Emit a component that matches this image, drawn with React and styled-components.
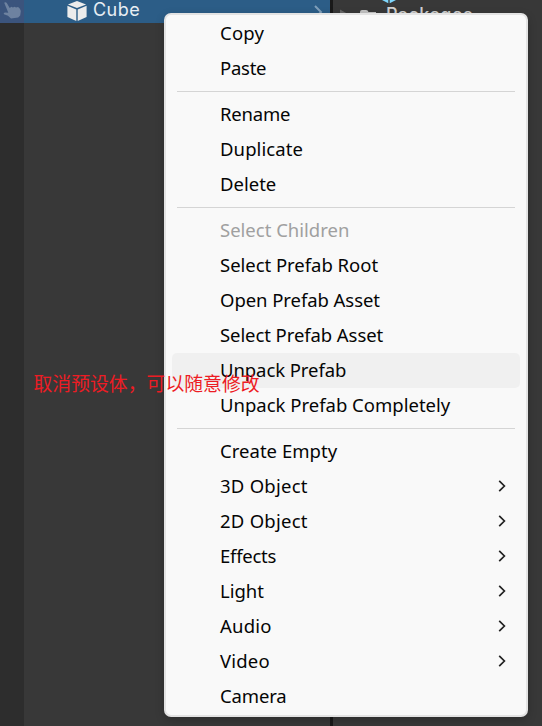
import React from "react";
import styled, { createGlobalStyle } from "styled-components";

const Global = createGlobalStyle`
  * { box-sizing: border-box; }
  body { margin: 0; background: #383838; overflow: hidden; }
`;

const Editor = styled.main`
  position: relative;
  display: grid;
  grid-template-columns: 330px 3px 1fr;
  width: 542px;
  height: 726px;
  overflow: hidden;
  background: #383838;
`;

const Hierarchy = styled.section`
  display: grid;
  grid-template-columns: 24px 1fr;
  grid-template-rows: 23px 1fr;
`;

const PickCell = styled.div`
  background: #3b547d;
  svg { display: block; }
`;

const SelectedRow = styled.div`
  display: flex;
  align-items: flex-start;
  background: #2c5d87;
  padding-left: 42px;
  svg { flex: none; }
`;

const ObjectName = styled.span`
  width: 225px;
  padding-left: 5px;
  font: 18px/20px Inter, sans-serif;
  letter-spacing: 0.45px;
  color: #e8eef3;
`;

const Gutter = styled.div`
  background: #2d2d2d;
`;

const Divider = styled.div`
  background: #191919;
`;

const Project = styled.section`
  display: flex;
  align-items: flex-start;
  padding-left: 5px;
  svg { flex: none; }
`;

const FolderName = styled.span`
  margin-top: 4px;
  margin-left: -18px;
  font: 500 18px/22px Inter, sans-serif;
  letter-spacing: 0.4px;
  color: #d0d0d0;
`;

const Menu = styled.div`
  position: absolute;
  left: 164px;
  top: 13px;
  width: 364px;
  height: 704px;
  padding: 1px 6px;
  border: 2px solid #e3e3e3;
  border-radius: 7px;
  background: #f9f9f9;
  box-shadow: 0 3px 10px rgba(0, 0, 0, 0.2);
`;

const Item = styled.div`
  display: flex;
  align-items: center;
  justify-content: space-between;
  height: 35px;
  padding: 0 14px 2px 48px;
  border-radius: 5px;
  background: ${(p) => (p.$active ? "#f0f0f0" : "transparent")};
  color: ${(p) => (p.$disabled ? "#a0a0a0" : "#050505")};
  font: 400 18.5px/33px "Noto Sans", "Open Sans", sans-serif;
  letter-spacing: ${(p) => p.$spacing ?? 0}px;
  white-space: nowrap;
`;

const Separator = styled.div`
  height: 1px;
  margin: 5px;
  background: #d5d5d5;
`;

const Note = styled.div`
  position: absolute;
  left: 33.5px;
  top: 369px;
  font: 18.85px/28px "Noto Sans CJK SC", sans-serif;
  color: #ed1c24;
  white-space: nowrap;
`;

const groups = [
  [{ t: "Copy", spacing: 0.2 }, { t: "Paste", spacing: -0.25 }],
  [{ t: "Rename", spacing: -0.2 }, { t: "Duplicate", spacing: 0.1 }, { t: "Delete" }],
  [
    { t: "Select Children", disabled: true },
    { t: "Select Prefab Root", spacing: -0.03 },
    { t: "Open Prefab Asset", spacing: -0.06 },
    { t: "Select Prefab Asset", spacing: -0.08 },
    { t: "Unpack Prefab", active: true, spacing: -0.08 },
    { t: "Unpack Prefab Completely" },
  ],
  [
    { t: "Create Empty", spacing: 0.03 },
    { t: "3D Object", sub: true, spacing: 0.25 },
    { t: "2D Object", sub: true, spacing: 0.25 },
    { t: "Effects", sub: true, spacing: -0.25 },
    { t: "Light", sub: true },
    { t: "Audio", sub: true, spacing: 0.2 },
    { t: "Video", sub: true, spacing: 0.2 },
    { t: "Camera", spacing: -0.15 },
  ],
];

const Chevron = () => (
  <svg width="8" height="12" viewBox="0 0 8 12" fill="none" stroke="#222" strokeWidth="1.7">
    <path d="M1.2 0.8 6.4 6 1.2 11.2" />
  </svg>
);

const Hand = () => (
  <svg width="24" height="23" viewBox="0 0 24 23" fill="#6e82a0">
    <path d="M4.2 2.8C5 1.8 6.3 2.2 6.8 3.1L9.7 8l1.7-1.2 1.5.8 1.8-.9 1.3.9 2-.5c1.4.7 2.7 2.4 2.8 4.2l-.6 4.2-2 2.1-7.2 1-3-2.9-4-1.4c-.7-1 .1-1.8 1.2-1.8l3.1.2Z" />
  </svg>
);

const Cube = () => (
  <svg width="22" height="23" viewBox="0 0 22 23" fill="#ececec">
    <path d="m11 1 9.1 3.4L11 8.1 1.9 4.4ZM1.4 5.8 10.3 9.5V21L1.4 17ZM20.6 5.8 11.7 9.5V21l8.9-4Z" />
  </svg>
);

const FolderIcons = () => (
  <svg width="66" height="20" viewBox="0 0 66 20">
    <path d="M2 9.5 9 13.5 2 17Z" fill="#666" />
    <path d="M22 12q0-2 2-2h4q2 0 2.5 2H38v8H22Z" fill="#c2c2c2" />
    <path d="M44 0h6.3v3.2ZM51.7 0H58l-6.3 3.2Z" fill="#7fd6fc" />
  </svg>
);

export default function App() {
  return (
    <>
      <Global />
      <Editor>
        <Hierarchy>
          <PickCell><Hand /></PickCell>
          <SelectedRow>
            <Cube />
            <ObjectName>Cube</ObjectName>
            <svg width="12" height="20" viewBox="0 0 12 20" fill="none" stroke="#7f9fba" strokeWidth="2">
              <path d="m2 6 6 6-6 6" />
            </svg>
          </SelectedRow>
          <Gutter />
        </Hierarchy>
        <Divider />
        <Project>
          <FolderIcons />
          <FolderName>Packages</FolderName>
        </Project>
        <Menu>
          {groups.map((group, i) => (
            <React.Fragment key={i}>
              {i > 0 && <Separator />}
              {group.map((item) => (
                <Item key={item.t} $active={item.active} $disabled={item.disabled} $spacing={item.spacing}>
                  <span>{item.t}</span>
                  {item.sub && <Chevron />}
                </Item>
              ))}
            </React.Fragment>
          ))}
        </Menu>
        <Note>取消预设体，可以随意修改</Note>
      </Editor>
    </>
  );
}
